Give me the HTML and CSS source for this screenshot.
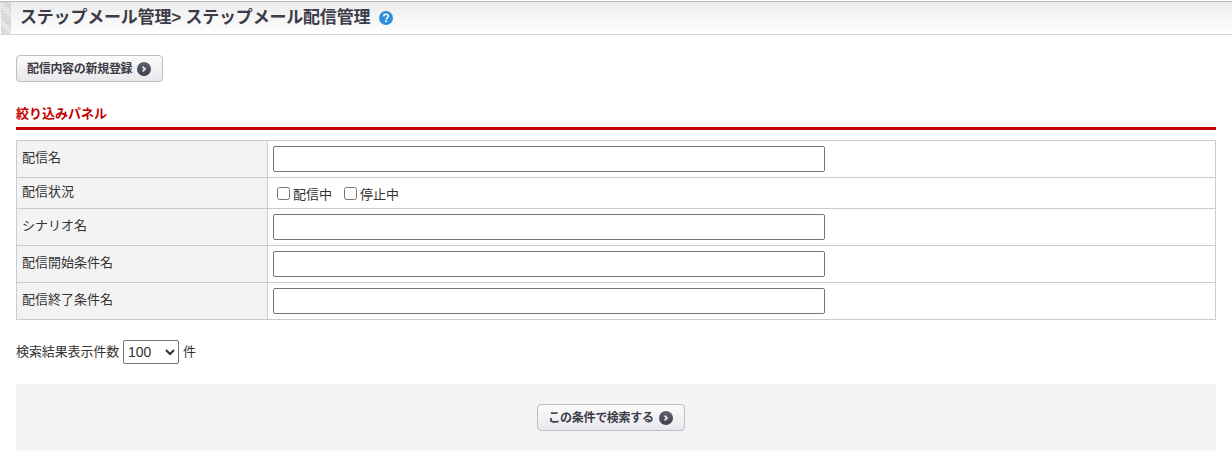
FILE: index.html
```html
<!DOCTYPE html>
<html lang="ja">
<head>
<meta charset="utf-8">
<title>ステップメール配信管理</title>
<link rel="stylesheet" href="styles.css">
</head>
<body>
<header class="page-head">
  <div class="stripe"></div>
  <h1 class="title">ステップメール管理&gt; ステップメール配信管理</h1>
  <svg class="help" width="14" height="14" viewBox="0 0 14 14" aria-hidden="true"><circle cx="7" cy="7" r="7" fill="#2e8ede"/><path d="M4.7 5.4C4.8 4 5.8 3.3 7 3.3c1.3 0 2.3.8 2.3 2 0 1-.6 1.4-1.2 1.8-.6.4-.9.7-.9 1.4" fill="none" stroke="#fff" stroke-width="1.6"/><rect x="6.2" y="9.3" width="1.8" height="1.8" fill="#fff"/></svg>
</header>
<main class="content">
  <div class="top-action">
    <button class="btn" type="button"><span class="btn-text">配信内容の新規登録</span><svg class="arrow" width="14" height="14" viewBox="0 0 14 14" aria-hidden="true"><defs><linearGradient id="a1" x1="0" y1="0" x2="0" y2="1"><stop offset="0" stop-color="#62626f"/><stop offset="1" stop-color="#3f3f4c"/></linearGradient></defs><circle cx="7" cy="7" r="7" fill="url(#a1)"/><path d="M5.6 4.6 8 7 5.6 9.4" fill="none" stroke="#e8e8e8" stroke-width="1.8"/></svg></button>
  </div>
  <h2 class="panel-title">絞り込みパネル</h2>
  <table class="filter">
    <tr class="tall"><th>配信名</th><td><input class="field" type="text"></td></tr>
    <tr class="short"><th>配信状況</th><td class="checks"><label><input type="checkbox">配信中</label><label><input type="checkbox">停止中</label></td></tr>
    <tr class="tall"><th>シナリオ名</th><td><input class="field" type="text"></td></tr>
    <tr class="tall"><th>配信開始条件名</th><td><input class="field" type="text"></td></tr>
    <tr class="tall"><th>配信終了条件名</th><td><input class="field" type="text"></td></tr>
  </table>
  <div class="count"><span class="count-text">検索結果表示件数</span><select class="count-select"><option>100</option></select><span class="count-text">件</span></div>
  <div class="search-bar">
    <button class="btn" type="button"><span class="btn-text">この条件で検索する</span><svg class="arrow" width="14" height="14" viewBox="0 0 14 14" aria-hidden="true"><defs><linearGradient id="a2" x1="0" y1="0" x2="0" y2="1"><stop offset="0" stop-color="#62626f"/><stop offset="1" stop-color="#3f3f4c"/></linearGradient></defs><circle cx="7" cy="7" r="7" fill="url(#a2)"/><path d="M5.6 4.6 8 7 5.6 9.4" fill="none" stroke="#e8e8e8" stroke-width="1.8"/></svg></button>
  </div>
</main>
</body>
</html>
```
FILE: styles.css
```css
* { box-sizing: border-box; }
html, body { margin: 0; padding: 0; }
body {
  padding-top: 1px;
  background: #fff;
  color: #333;
  font-family: "Liberation Sans", "Noto Sans CJK JP", sans-serif;
  font-size: 13px;
}
.page-head {
  display: flex;
  align-items: center;
  height: 34px;
  border-top: 1px solid #b9b9bb;
  border-bottom: 1px solid #d6d6de;
  background: linear-gradient(#ececec, #fff);
}
.stripe {
  width: 10px;
  margin-left: 1px;
  align-self: stretch;
  background: repeating-linear-gradient(45deg, #cfcfcf 0 1px, #f0f0f0 1px 2px);
}
.title {
  margin: 0 0 0 9px;
  color: #3c3c48;
  font-size: 17px;
  font-weight: bold;
  letter-spacing: -0.2px;
  line-height: 32px;
}
.help { margin-left: 9px; }
.content { padding: 20px 16px 0; }
.top-action { height: 27px; }
.btn {
  display: inline-flex;
  align-items: center;
  gap: 5px;
  height: 27px;
  padding: 0 11px 0 10px;
  border: 1px solid #bcbcc8;
  border-radius: 4px;
  background: linear-gradient(#fbfbfb, #e9e9ec);
  color: #3c3c48;
  font-family: inherit;
  font-size: 12px;
  font-weight: bold;
}
.btn-text {
  padding-bottom: 3px;
  letter-spacing: -0.3px;
}
.panel-title {
  margin: 23px 0 0;
  height: 25px;
  border-bottom: 3px solid #c60000;
  color: #c60000;
  font-size: 13px;
  font-weight: bold;
  line-height: 17px;
}
.filter {
  width: 100%;
  margin-top: 10px;
  border-collapse: collapse;
  table-layout: fixed;
}
.filter th, .filter td {
  border: 1px solid #ccc;
  padding: 0 5px;
  text-align: left;
  font-weight: normal;
}
.filter th {
  width: 251px;
  background: #f3f3f3;
  color: #333;
  vertical-align: top;
  padding-top: 6px;
}
.filter .short th { padding-top: 3px; }
.tall { height: 37px; }
.short { height: 31px; }
.field {
  display: block;
  width: 552px;
  height: 26px;
  border: 1px solid #767676;
  border-radius: 2px;
  background: #fff;
}
.filter .checks { padding-top: 1px; }
.checks label {
  display: inline-flex;
  align-items: center;
  margin-left: 4px;
  margin-right: 8px;
}
.checks input {
  width: 13px;
  height: 13px;
  margin: 0 3px 0 0;
}
.count {
  display: flex;
  align-items: center;
  gap: 4px;
  height: 26px;
  margin-top: 19px;
}
.count-text {
  padding-bottom: 3px;
  letter-spacing: -0.12px;
}
.count-select {
  width: 56px;
  height: 24px;
  border: 1px solid #767676;
  border-radius: 2px;
  background-color: #fff;
  color: #333;
  font-family: inherit;
  font-size: 14px;
}
.search-bar {
  display: flex;
  justify-content: center;
  align-items: center;
  height: 67px;
  margin-top: 19px;
  padding-right: 10px;
  background: #f4f4f4;
}
```
